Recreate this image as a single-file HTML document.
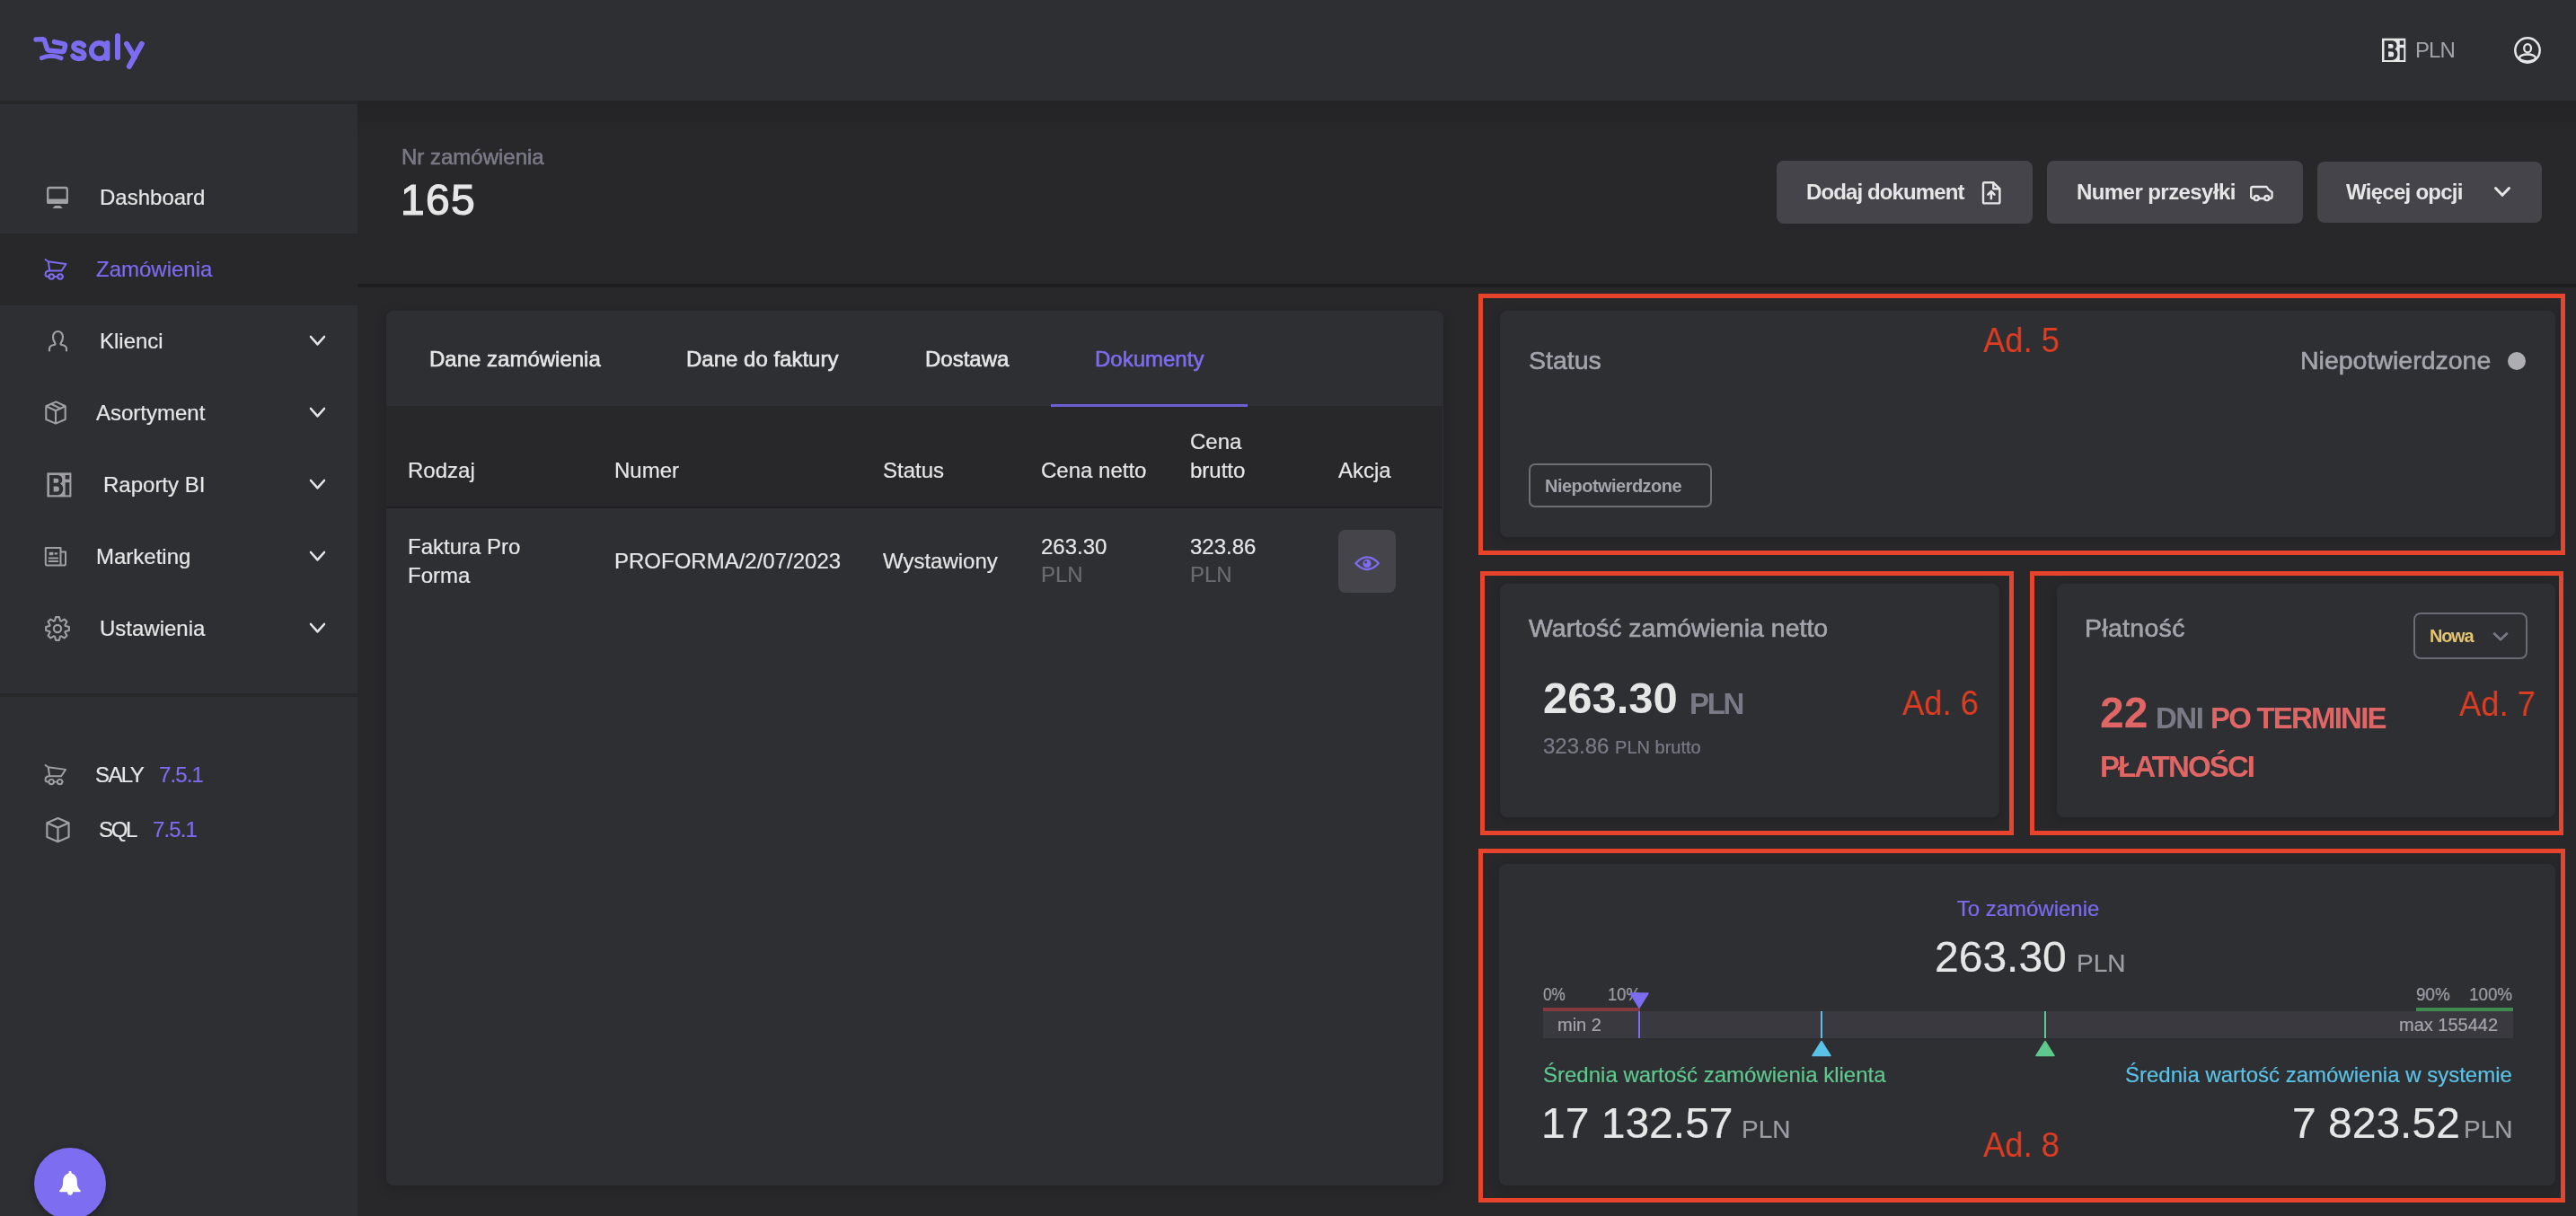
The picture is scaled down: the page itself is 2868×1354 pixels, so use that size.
<!DOCTYPE html>
<html><head><meta charset="utf-8">
<style>
*{margin:0;padding:0;box-sizing:border-box}
html,body{width:2868px;height:1354px;overflow:hidden;background:#28282b;font-family:"Liberation Sans",sans-serif;color:#e6e6e6;position:relative}
.a{position:absolute}
.t{position:absolute;white-space:nowrap;line-height:1;z-index:3;will-change:transform;-webkit-text-stroke:0.2px currentColor}
.m{-webkit-text-stroke:0.6px currentColor}
.b{font-weight:bold;-webkit-text-stroke:0}
.ad{-webkit-text-stroke:0}
.btn{position:absolute;top:179px;height:70px;background:#45444b;border-radius:8px}
.card{position:absolute;background:#2e2f33;border-radius:8px;box-shadow:0 3px 14px rgba(0,0,0,0.18)}
.red{position:absolute;border:5px solid #e8432b;z-index:2}
svg.ov{position:absolute;left:0;top:0;z-index:4}
</style></head>
<body>
<div class="a" style="left:0;top:0;width:2868px;height:112px;background:#2e2f33;z-index:1"></div>
<div class="a" style="left:0;top:112px;width:398px;height:1242px;background:#27272a"></div>
<div class="a" style="left:398px;top:112px;width:2470px;height:40px;background:linear-gradient(#232326,#28282b)"></div>
<div class="a" style="left:0;top:116px;width:398px;height:1238px;background:#2e2f33"></div>
<div class="a" style="left:0;top:260px;width:398px;height:80px;background:#28282b"></div>
<div class="a" style="left:0;top:772px;width:398px;height:3.5px;background:#28282b"></div>
<div class="a" style="left:398px;top:316px;width:2470px;height:4px;background:#1e1e20"></div>
<div class="btn" style="left:1978px;width:285px"></div>
<div class="btn" style="left:2279px;width:285px"></div>
<div class="btn" style="left:2580px;width:250px;top:180px;height:68px"></div>
<div class="card" style="left:430px;top:346px;width:1177px;height:974px"></div>
<div class="a" style="left:430px;top:452px;width:1176px;height:113px;background:#28282b"></div>
<div class="a" style="left:430px;top:564px;width:1176px;height:2px;background:#1f1f22"></div>
<div class="a" style="left:1170px;top:450px;width:219px;height:2.5px;background:#6b5fd2"></div>
<div class="a" style="left:1490px;top:590px;width:64px;height:70px;background:#45444b;border-radius:8px"></div>
<div class="card" style="left:1670px;top:346px;width:1175px;height:252px"></div>
<div class="card" style="left:1670px;top:650px;width:556px;height:260px"></div>
<div class="card" style="left:2290px;top:650px;width:555px;height:260px"></div>
<div class="card" style="left:1669px;top:962px;width:1176px;height:358px"></div>
<div class="a" style="left:1702px;top:516px;width:204px;height:49px;border:2px solid #6f6e75;border-radius:7px"></div>
<div class="a" style="left:2687px;top:682px;width:127px;height:52px;border:2px solid #6c6a74;border-radius:8px"></div>
<div class="a" style="left:1718px;top:1126px;width:1080px;height:30px;background:#3a393f"></div>
<div class="a" style="left:1718px;top:1122px;width:108px;height:4px;background:#863a3f"></div>
<div class="a" style="left:2690px;top:1122px;width:108px;height:4px;background:#3f8a4f"></div>
<div class="a" style="left:1824px;top:1126px;width:2px;height:30px;background:#7b6cf0"></div>
<div class="a" style="left:2027px;top:1126px;width:2px;height:30px;background:#5bc2e7"></div>
<div class="a" style="left:2276px;top:1126px;width:2px;height:30px;background:#5ec98d"></div>
<div class="red" style="left:1646px;top:327px;width:1210px;height:291px"></div>
<div class="red" style="left:1648px;top:636px;width:594px;height:294px"></div>
<div class="red" style="left:2260px;top:636px;width:594px;height:294px"></div>
<div class="red" style="left:1646px;top:945px;width:1210px;height:394px"></div>
<div class="a" style="left:38px;top:1278px;width:80px;height:80px;border-radius:50%;background:#7d6ef1;box-shadow:0 2px 8px rgba(0,0,0,0.3)"></div>
<div class="t " style="left:2689.0px;top:43.7px;font-size:24px;color:#a4a3ad;-webkit-text-stroke:0;letter-spacing:-0.9px;">PLN</div>
<div class="t " style="left:111.0px;top:207.7px;font-size:24px;color:#e6e6e6;">Dashboard</div>
<div class="t " style="left:107.0px;top:287.7px;font-size:24px;color:#7b6cf0;">Zamówienia</div>
<div class="t " style="left:111.0px;top:367.7px;font-size:24px;color:#e6e6e6;">Klienci</div>
<div class="t " style="left:107.0px;top:447.7px;font-size:24px;color:#e6e6e6;">Asortyment</div>
<div class="t " style="left:115.0px;top:527.7px;font-size:24px;color:#e6e6e6;">Raporty BI</div>
<div class="t " style="left:107.0px;top:607.7px;font-size:24px;color:#e6e6e6;">Marketing</div>
<div class="t " style="left:111.0px;top:687.7px;font-size:24px;color:#e6e6e6;">Ustawienia</div>
<div class="t " style="left:106.0px;top:850.7px;font-size:24px;color:#e6e6e6;letter-spacing:-1.6px;">SALY</div>
<div class="t " style="left:176.5px;top:850.7px;font-size:24px;color:#7b6cf0;letter-spacing:-0.9px;">7.5.1</div>
<div class="t " style="left:110.0px;top:911.7px;font-size:24px;color:#e6e6e6;letter-spacing:-2.3px;">SQL</div>
<div class="t " style="left:170.0px;top:911.7px;font-size:24px;color:#7b6cf0;letter-spacing:-0.9px;">7.5.1</div>
<div class="t m" style="left:447.0px;top:162.7px;font-size:24px;color:#7a7986;">Nr zamówienia</div>
<div class="t m" style="left:446.0px;top:199.4px;font-size:48px;color:#e6e6e6;-webkit-text-stroke:1.2px currentColor;letter-spacing:1.3px;">165</div>
<div class="t b" style="left:2011.0px;top:201.7px;font-size:24px;color:#e6e6e6;letter-spacing:-0.88px;">Dodaj dokument</div>
<div class="t b" style="left:2311.5px;top:201.7px;font-size:24px;color:#e6e6e6;letter-spacing:-0.57px;">Numer przesyłki</div>
<div class="t b" style="left:2612.0px;top:201.7px;font-size:24px;color:#e6e6e6;letter-spacing:-0.73px;">Więcej opcji</div>
<div class="t m" style="left:478.0px;top:387.7px;font-size:24px;color:#e6e6e6;">Dane zamówienia</div>
<div class="t m" style="left:764.0px;top:387.7px;font-size:24px;color:#e6e6e6;">Dane do faktury</div>
<div class="t m" style="left:1030.0px;top:387.7px;font-size:24px;color:#e6e6e6;">Dostawa</div>
<div class="t m" style="left:1219.0px;top:387.7px;font-size:24px;color:#7b6cf0;">Dokumenty</div>
<div class="t " style="left:454.0px;top:512.2px;font-size:24px;color:#e6e6e6;">Rodzaj</div>
<div class="t " style="left:683.5px;top:512.2px;font-size:24px;color:#e6e6e6;">Numer</div>
<div class="t " style="left:983.0px;top:512.2px;font-size:24px;color:#e6e6e6;">Status</div>
<div class="t " style="left:1159.0px;top:512.2px;font-size:24px;color:#e6e6e6;">Cena netto</div>
<div class="t " style="left:1490.0px;top:512.2px;font-size:24px;color:#e6e6e6;">Akcja</div>
<div class="t " style="left:1324.5px;top:479.7px;font-size:24px;color:#e6e6e6;">Cena</div>
<div class="t " style="left:1324.5px;top:511.7px;font-size:24px;color:#e6e6e6;">brutto</div>
<div class="t " style="left:454.0px;top:596.7px;font-size:24px;color:#e6e6e6;">Faktura Pro</div>
<div class="t " style="left:454.0px;top:628.7px;font-size:24px;color:#e6e6e6;">Forma</div>
<div class="t " style="left:683.5px;top:612.7px;font-size:24px;color:#e6e6e6;">PROFORMA/2/07/2023</div>
<div class="t " style="left:983.0px;top:612.7px;font-size:24px;color:#e6e6e6;">Wystawiony</div>
<div class="t " style="left:1159.0px;top:596.7px;font-size:24px;color:#e6e6e6;">263.30</div>
<div class="t " style="left:1159.0px;top:628.2px;font-size:24px;color:#6b6a71;">PLN</div>
<div class="t " style="left:1324.5px;top:596.7px;font-size:24px;color:#e6e6e6;">323.86</div>
<div class="t " style="left:1324.5px;top:628.2px;font-size:24px;color:#6b6a71;">PLN</div>
<div class="t m" style="left:1702.0px;top:386.9px;font-size:28.5px;color:#a5a4ad;">Status</div>
<div class="t b" style="left:1720.0px;top:531.1px;font-size:20px;color:#a5a4ad;letter-spacing:-0.53px;">Niepotwierdzone</div>
<div class="t m" style="right:94.5px;top:386.9px;font-size:28.5px;color:#a5a4ad;">Niepotwierdzone</div>
<div class="a" style="left:2792px;top:392px;width:20px;height:20px;border-radius:50%;background:#aeadb3"></div>
<div class="t m" style="left:1702.0px;top:685.4px;font-size:28.5px;color:#a5a4ad;">Wartość zamówienia netto</div>
<div class="t b" style="left:1717.5px;top:753.0px;font-size:49px;color:#e6e6e6;">263.30</div>
<div class="t b" style="left:1880.6px;top:766.6px;font-size:33px;color:#7b7986;letter-spacing:-2.3px;">PLN</div>
<div class="t " style="left:1717.5px;top:819.4px;font-size:24px;color:#7c7a87;">323.86 <span style="font-size:20px">PLN brutto</span></div>
<div class="t m" style="left:2321.0px;top:685.4px;font-size:28.5px;color:#a5a4ad;letter-spacing:0.3px;">Płatność</div>
<div class="t b" style="left:2705.0px;top:697.8px;font-size:20px;color:#e3c46f;letter-spacing:-1.27px;">Nowa</div>
<div class="t b" style="left:2338.0px;top:770.2px;font-size:48px;color:#e06565;">22</div>
<div class="t b" style="left:2399.8px;top:782.9px;font-size:33px;color:#7b7986;letter-spacing:-1.5px;">DNI</div>
<div class="t b" style="left:2461.0px;top:782.9px;font-size:33px;color:#e06565;letter-spacing:-1.8px;">PO TERMINIE</div>
<div class="t b" style="left:2338.0px;top:837.4px;font-size:33px;color:#e06565;letter-spacing:-1.9px;">PŁATNOŚCI</div>
<div class="t " style="left:2258.0px;transform:translateX(-50%);top:1000.3px;font-size:24px;color:#7b6cf0;">To zamówienie</div>
<div class="t " style="left:2153.5px;top:1041.8px;font-size:48px;color:#e6e6e6;">263.30</div>
<div class="t " style="left:2312.0px;top:1058.7px;font-size:28px;color:#9e9da6;">PLN</div>
<div class="t " style="left:1718.0px;top:1096.8px;font-size:20px;color:#a5a4ad;transform:scaleX(0.86);transform-origin:left top;">0%</div>
<div class="t " style="left:1789.5px;top:1096.8px;font-size:20px;color:#a5a4ad;transform:scaleX(0.92);transform-origin:left top;">10%</div>
<div class="t " style="left:2690.0px;top:1096.8px;font-size:20px;color:#a5a4ad;transform:scaleX(0.94);transform-origin:left top;">90%</div>
<div class="t " style="right:70.5px;top:1096.8px;font-size:20px;color:#a5a4ad;transform:scaleX(0.94);transform-origin:right top;">100%</div>
<div class="t " style="left:1734.0px;top:1131.1px;font-size:20px;color:#a5a4ad;">min 2</div>
<div class="t " style="right:87.0px;top:1131.1px;font-size:20px;color:#a5a4ad;">max 155442</div>
<div class="t " style="left:1718.0px;top:1185.2px;font-size:24px;color:#5ec98d;">Średnia wartość zamówienia klienta</div>
<div class="t " style="right:71.0px;top:1185.2px;font-size:24px;color:#5bc2e7;">Średnia wartość zamówienia w systemie</div>
<div class="t " style="left:1715.5px;top:1226.9px;font-size:48px;color:#e6e6e6;">17 132.57</div>
<div class="t " style="left:1938.6px;top:1243.8px;font-size:28px;color:#9e9da6;">PLN</div>
<div class="t " style="right:129.5px;top:1226.9px;font-size:48px;color:#e6e6e6;">7 823.52</div>
<div class="t " style="right:71.0px;top:1243.8px;font-size:28px;color:#9e9da6;">PLN</div>
<div class="t ad" style="left:2208.0px;top:360.1px;font-size:38px;color:#df3d22;transform:scaleX(0.958);transform-origin:left top;">Ad. 5</div>
<div class="t ad" style="left:2118.0px;top:763.8px;font-size:38px;color:#df3d22;transform:scaleX(0.958);transform-origin:left top;">Ad. 6</div>
<div class="t ad" style="left:2738.0px;top:765.4px;font-size:38px;color:#df3d22;transform:scaleX(0.958);transform-origin:left top;">Ad. 7</div>
<div class="t ad" style="left:2207.5px;top:1255.8px;font-size:38px;color:#df3d22;transform:scaleX(0.958);transform-origin:left top;">Ad. 8</div>
<svg class="ov" width="2868" height="1354" viewBox="0 0 2868 1354">
<path d="M40,44 L47.5,43.6 Q49,43.6 49.5,45 L52.5,54.6 Q53,56 55,56.2 L69,57.5 Q71,57.6 71.5,55.6 L72.5,51.6 Q73,49.6 71,48.9 L60.5,46.6" fill="none" stroke="#7b6cf0" stroke-width="5.4" stroke-linecap="round" stroke-linejoin="round" />
<path d="M46.5,64.6 Q57,59.6 68,64.8" fill="none" stroke="#7b6cf0" stroke-width="5" stroke-linecap="round" stroke-linejoin="round" />
<path d="M93.2,50.6 C91.8,48.8 89.6,47.9 87.4,47.9 C84.2,47.9 82,49.6 82,52 C82,54.5 84.4,55.6 87.6,56.5 C91,57.4 93.7,58.6 93.7,61.5 C93.7,64 91.2,65.3 87.6,65.3 C84.8,65.3 82.4,64.1 81.3,62.3" fill="none" stroke="#7b6cf0" stroke-width="5.8" stroke-linecap="round" stroke-linejoin="round" />
<circle cx="110.5" cy="56.6" r="8.7" fill="none" stroke="#7b6cf0" stroke-width="5.8"/>
<path d="M119.4,48 L119.4,65" fill="none" stroke="#7b6cf0" stroke-width="6" stroke-linecap="round" stroke-linejoin="round" />
<path d="M131,40 L131,64" fill="none" stroke="#7b6cf0" stroke-width="6" stroke-linecap="round" stroke-linejoin="round" />
<path d="M141,48.8 L149.8,63.8" fill="none" stroke="#7b6cf0" stroke-width="6" stroke-linecap="round" stroke-linejoin="round" />
<path d="M157.8,48.8 L143.8,74" fill="none" stroke="#7b6cf0" stroke-width="6" stroke-linecap="round" stroke-linejoin="round" />
<g transform="translate(2652,42.7) scale(1.0115)"><rect x="0" y="0" width="26" height="26" fill="#e6e6e6"/><path fill-rule="evenodd" fill="#2e2f33" d="M2.5,2.5 H10.5 C14.5,2.5 16.3,4.6 16.3,7.6 C16.3,9.6 15.4,11 13.9,11.8 C16,12.5 17.2,14.6 17.2,17.2 C17.2,21.3 14.6,24 10.6,24 H2.5 Z M7,6.2 V11 H10.3 C11.8,11 12.5,10.1 12.5,8.6 C12.5,7.1 11.8,6.2 10.3,6.2 Z M7,14.6 V20.4 H10.6 C12.2,20.4 13,19.4 13,17.5 C13,15.6 12.2,14.6 10.6,14.6 Z"/><rect x="19.5" y="2.5" width="4.5" height="4.5" fill="#2e2f33"/><rect x="19.5" y="10.4" width="4.5" height="13.6" fill="#2e2f33"/></g>
<g transform="translate(52.4,526.4) scale(1.0385)"><rect x="0" y="0" width="26" height="26" fill="#a09fa6"/><path fill-rule="evenodd" fill="#2e2f33" d="M2.5,2.5 H10.5 C14.5,2.5 16.3,4.6 16.3,7.6 C16.3,9.6 15.4,11 13.9,11.8 C16,12.5 17.2,14.6 17.2,17.2 C17.2,21.3 14.6,24 10.6,24 H2.5 Z M7,6.2 V11 H10.3 C11.8,11 12.5,10.1 12.5,8.6 C12.5,7.1 11.8,6.2 10.3,6.2 Z M7,14.6 V20.4 H10.6 C12.2,20.4 13,19.4 13,17.5 C13,15.6 12.2,14.6 10.6,14.6 Z"/><rect x="19.5" y="2.5" width="4.5" height="4.5" fill="#2e2f33"/><rect x="19.5" y="10.4" width="4.5" height="13.6" fill="#2e2f33"/></g>
<circle cx="2814" cy="56" r="13.7" fill="none" stroke="#e6e6e6" stroke-width="2.5"/>
<ellipse cx="2814.1" cy="53.8" rx="3.9" ry="4.7" fill="none" stroke="#e6e6e6" stroke-width="2.3"/>
<ellipse cx="2814" cy="64.4" rx="8.9" ry="3.9" fill="none" stroke="#e6e6e6" stroke-width="2.3"/>
<rect x="53.2" y="209" width="21.6" height="16.8" rx="2" fill="none" stroke="#a09fa6" stroke-width="2.3"/>
<rect x="52.1" y="221.5" width="23.8" height="5.4" rx="1.5" fill="#a09fa6"/>
<path d="M61.3,229 L67,229 L69.8,232 L58.4,232 Z" fill="#a09fa6"/>
<g transform="translate(50,288.5) scale(1.0)">
<path d="M0.5,0.5 L3.8,2.8 L5.3,13 M3.8,2.8 L23.5,5.5 L18.5,13 L5.3,13 C2,13 0.5,15 0.5,17 C0.5,19 2,19.5 4,19.5 L20,19.5" fill="none" stroke="#7b6cf0" stroke-width="2" stroke-linecap="round" stroke-linejoin="round" />
<circle cx="7.3" cy="19.5" r="2.8" fill="#2e2f33" stroke="#7b6cf0" stroke-width="2"/><circle cx="17" cy="19.5" r="2.8" fill="#2e2f33" stroke="#7b6cf0" stroke-width="2"/></g>
<g transform="translate(50,851.5) scale(0.98)">
<path d="M0.5,0.5 L3.8,2.8 L5.3,13 M3.8,2.8 L23.5,5.5 L18.5,13 L5.3,13 C2,13 0.5,15 0.5,17 C0.5,19 2,19.5 4,19.5 L20,19.5" fill="none" stroke="#a09fa6" stroke-width="2" stroke-linecap="round" stroke-linejoin="round" />
<circle cx="7.3" cy="19.5" r="2.8" fill="#2e2f33" stroke="#a09fa6" stroke-width="2"/><circle cx="17" cy="19.5" r="2.8" fill="#2e2f33" stroke="#a09fa6" stroke-width="2"/></g>
<path d="M55,390.5 V388.3 C55,386.2 57,384.6 60,384 C61.5,383.7 62,383 61,381.5 C59.5,379.5 59,377 59,375 C59,371.5 61.5,369 64.5,369 C67.5,369 70,371.5 70,375 C70,377 69.5,379.5 68,381.5 C67,383 67.5,383.7 69,384 C72,384.6 74,386.2 74,388.3 V390.5" fill="none" stroke="#a09fa6" stroke-width="2.2" stroke-linecap="round" stroke-linejoin="round" />
<path d="M62.4,447.4 L72.7,452.3 L72.7,467 L62,471.6 L51.3,467 L51.3,452.3 Z M51.3,452.3 L62,457.3 L72.7,452.3 M62,457.3 V471.6" fill="none" stroke="#a09fa6" stroke-width="2.1" stroke-linecap="round" stroke-linejoin="round" />
<path d="M56.9,449.8 L67.4,454.9" fill="none" stroke="#a09fa6" stroke-width="2.1" stroke-linecap="round" stroke-linejoin="round" />
<g transform="translate(51.5,910.5) scale(1.08)">
<path d="M12,0.5 L23.2,5.3 L23.2,20 L12,24.7 L0.8,20 L0.8,5.3 Z M0.8,5.3 L12,10.3 L23.2,5.3 M12,10.3 L12,24.7" fill="none" stroke="#a09fa6" stroke-width="2.037037037037037" stroke-linecap="round" stroke-linejoin="round" />
</g>
<path d="M50.8,610 H67.5 V629.6 H53 Q50.8,629.6 50.8,627.4 Z M67.5,614.5 H73 V627.4 Q73,629.6 70.8,629.6 H67.5" fill="none" stroke="#a09fa6" stroke-width="2" stroke-linecap="round" stroke-linejoin="round" />
<rect x="54.7" y="614.8" width="4.6" height="3.4" fill="#a09fa6"/><rect x="60.5" y="615.3" width="3.6" height="2.2" fill="#a09fa6"/>
<path d="M54.7,621.4 H64.2 M54.7,625 H64.2" fill="none" stroke="#a09fa6" stroke-width="2" stroke-linecap="round" stroke-linejoin="round" />
<path d="M72.80,696.99 L76.85,698.06 L76.85,701.94 L72.80,703.01 L72.35,704.09 L74.46,707.72 L71.72,710.46 L68.09,708.35 L67.01,708.80 L65.94,712.85 L62.06,712.85 L60.99,708.80 L59.91,708.35 L56.28,710.46 L53.54,707.72 L55.65,704.09 L55.20,703.01 L51.15,701.94 L51.15,698.06 L55.20,696.99 L55.65,695.91 L53.54,692.28 L56.28,689.54 L59.91,691.65 L60.99,691.20 L62.06,687.15 L65.94,687.15 L67.01,691.20 L68.09,691.65 L71.72,689.54 L74.46,692.28 L72.35,695.91 Z" fill="none" stroke="#a09fa6" stroke-width="2.1" stroke-linecap="round" stroke-linejoin="round" />
<circle cx="64" cy="700" r="4.1" fill="none" stroke="#a09fa6" stroke-width="2.1"/>
<path d="M346,375.0 L353.5,383.3 L361,375.0" fill="none" stroke="#e6e6e6" stroke-width="2.6" stroke-linecap="round" stroke-linejoin="round" />
<path d="M346,455.0 L353.5,463.3 L361,455.0" fill="none" stroke="#e6e6e6" stroke-width="2.6" stroke-linecap="round" stroke-linejoin="round" />
<path d="M346,535.0 L353.5,543.3 L361,535.0" fill="none" stroke="#e6e6e6" stroke-width="2.6" stroke-linecap="round" stroke-linejoin="round" />
<path d="M346,615.0 L353.5,623.3 L361,615.0" fill="none" stroke="#e6e6e6" stroke-width="2.6" stroke-linecap="round" stroke-linejoin="round" />
<path d="M346,695.0 L353.5,703.3 L361,695.0" fill="none" stroke="#e6e6e6" stroke-width="2.6" stroke-linecap="round" stroke-linejoin="round" />
<path d="M2208,204.5 Q2208,203.3 2209.3,203.3 H2219.3 L2226.4,210.2 V225 Q2226.4,226.4 2225,226.4 H2209.3 Q2208,226.4 2208,225 Z M2219.3,203.3 V210.2 H2226.4" fill="none" stroke="#e6e6e6" stroke-width="2.4" stroke-linecap="round" stroke-linejoin="round" />
<path d="M2216.9,221.3 V213.8 M2213.4,216.6 L2216.9,213 L2220.5,216.6" fill="none" stroke="#e6e6e6" stroke-width="2.5" stroke-linecap="round" stroke-linejoin="round" />
<path d="M2506.2,219 V210 Q2506.2,208 2508.2,208 H2523.6 L2525.4,210.8 L2529.6,214 V218.8 Q2529.6,221 2527.5,221 M2509.5,221 Q2506.2,221 2506.2,219 M2515,221 H2521" fill="none" stroke="#e6e6e6" stroke-width="2.3" stroke-linecap="round" stroke-linejoin="round" />
<circle cx="2512.2" cy="220.6" r="2.6" fill="none" stroke="#e6e6e6" stroke-width="2.3"/><circle cx="2523.8" cy="220.6" r="2.6" fill="none" stroke="#e6e6e6" stroke-width="2.3"/>
<path d="M2778.5,209.5 L2786,217.3 L2793.5,209.5" fill="none" stroke="#e6e6e6" stroke-width="3" stroke-linecap="round" stroke-linejoin="round" />
<path d="M1509.4,627.2 Q1522,613.6 1534.8,627.2 Q1522,640.8 1509.4,627.2 Z" fill="none" stroke="#7b6cf0" stroke-width="2.4" stroke-linecap="round" stroke-linejoin="round" />
<circle cx="1522" cy="627.4" r="4.6" fill="#7b6cf0"/><circle cx="1520.7" cy="626" r="1.5" fill="#45444b"/>
<path d="M2776.3,704.8 L2784,712.3 L2791.7,704.8" fill="none" stroke="#7a7884" stroke-width="2.6" stroke-linecap="butt" stroke-linejoin="round" stroke-linejoin="miter"/>
<path d="M1815,1106 L1835,1106 L1825,1122 Z" fill="#7b6cf0" stroke="#7b6cf0" stroke-width="1.5" stroke-linejoin="round"/>
<path d="M2018,1175.5 L2038,1175.5 L2028,1159.5 Z" fill="#5bc2e7" stroke="#5bc2e7" stroke-width="1.5" stroke-linejoin="round"/>
<path d="M2267,1175.5 L2287,1175.5 L2277,1159.5 Z" fill="#5ec98d" stroke="#5ec98d" stroke-width="1.5" stroke-linejoin="round"/>
<path d="M76.6,1304.3 Q78,1303.6 79.4,1304.3 L79.6,1306.6 C83.6,1307.6 85.8,1311 85.8,1315.5 C85.8,1320 86.6,1322.6 89.6,1325.6 Q90.6,1327 89,1327.2 H67 Q65.4,1327 66.4,1325.6 C69.4,1322.6 70.2,1320 70.2,1315.5 C70.2,1311 72.4,1307.6 76.4,1306.6 Z" fill="#ffffff"/><circle cx="78" cy="1327.6" r="3.1" fill="#ffffff"/>
</svg>
</body></html>
